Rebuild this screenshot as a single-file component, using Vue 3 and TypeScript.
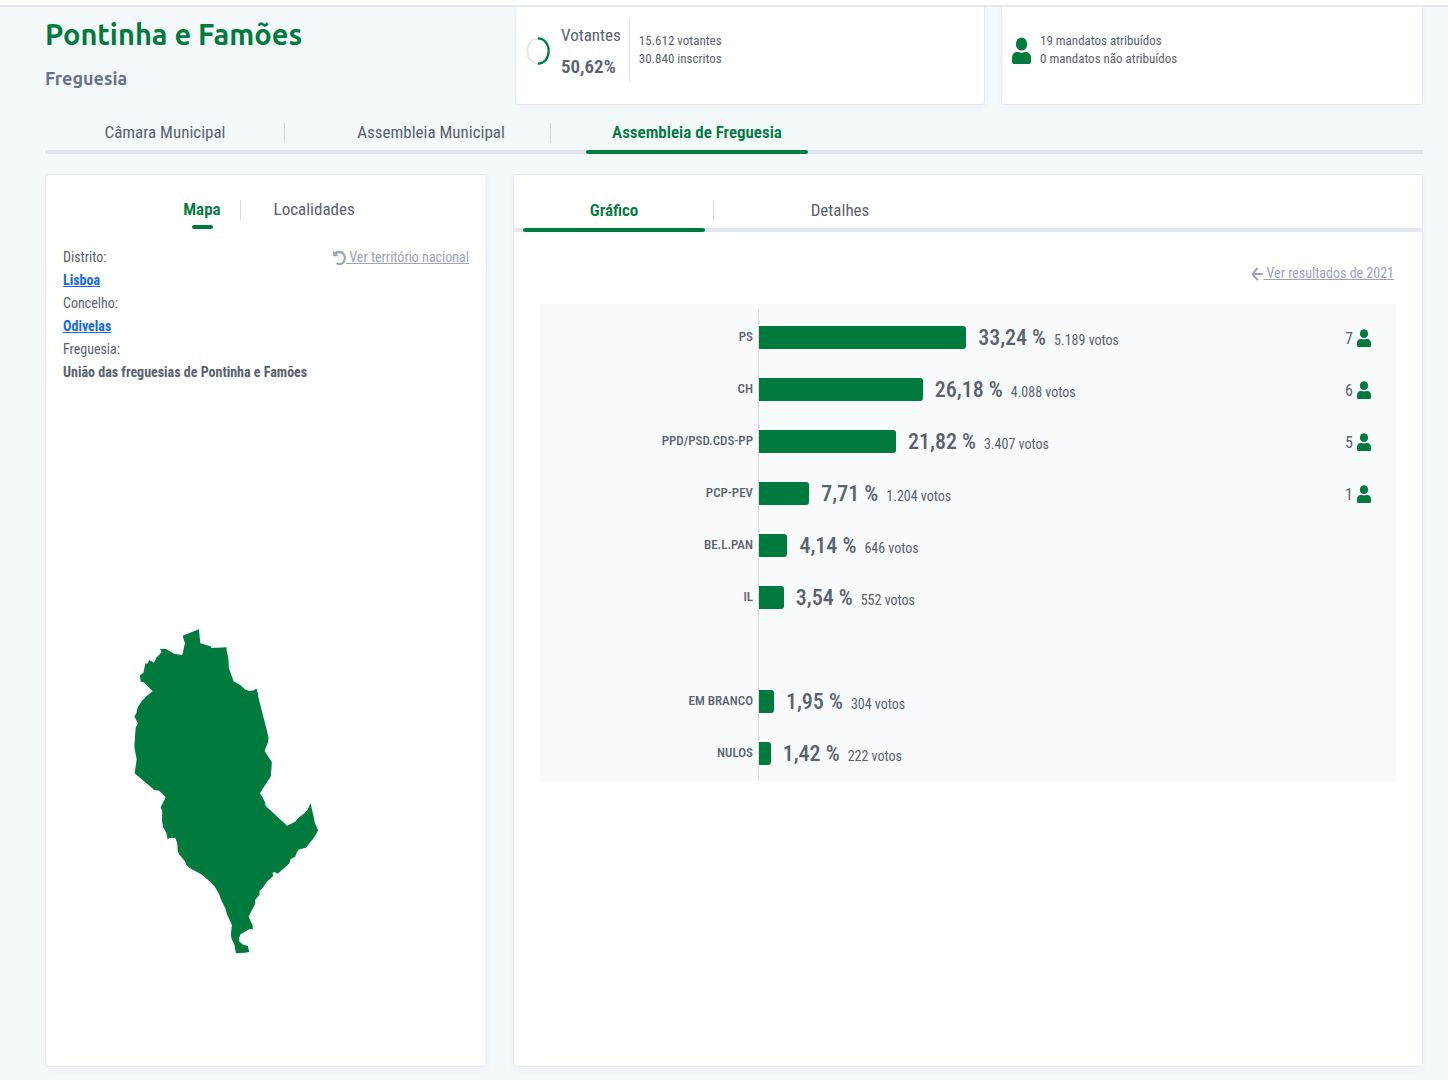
<script setup lang="ts">
import { ref } from 'vue'

interface Result {
  name: string
  percent: number
  label: string
  votes: string
  seats?: number
  separated?: boolean
}

const results: Result[] = [
  { name: 'PS', percent: 33.24, label: '33,24 %', votes: '5.189 votos', seats: 7 },
  { name: 'CH', percent: 26.18, label: '26,18 %', votes: '4.088 votos', seats: 6 },
  { name: 'PPD/PSD.CDS-PP', percent: 21.82, label: '21,82 %', votes: '3.407 votos', seats: 5 },
  { name: 'PCP-PEV', percent: 7.71, label: '7,71 %', votes: '1.204 votos', seats: 1 },
  { name: 'BE.L.PAN', percent: 4.14, label: '4,14 %', votes: '646 votos' },
  { name: 'IL', percent: 3.54, label: '3,54 %', votes: '552 votos' },
  { name: 'EM BRANCO', percent: 1.95, label: '1,95 %', votes: '304 votos', separated: true },
  { name: 'NULOS', percent: 1.42, label: '1,42 %', votes: '222 votos' },
]

const organs = ['Câmara Municipal', 'Assembleia Municipal', 'Assembleia de Freguesia']
const organ = ref(2)
const views = ['Gráfico', 'Detalhes']
const view = ref(0)
const places = ['Mapa', 'Localidades']
const place = ref(0)

const barWidth = (percent: number) => `calc(${(percent * 1.048).toFixed(2)}% + 3px)`
</script>

<template>
  <div class="page">
    <div class="topbar"></div>
    <header class="header">
      <div class="heading">
        <h1>Pontinha e Famões</h1>
        <p>Freguesia</p>
      </div>
      <section class="card summary">
        <svg class="ring" viewBox="0 0 24 28" aria-hidden="true">
          <ellipse cx="12" cy="14" rx="10.7" ry="12.7" fill="none" stroke="#e6eaee" stroke-width="2" />
          <path d="M12 1.3A10.7 12.7 0 0 1 12 26.7" fill="none" stroke="#007a3d" stroke-width="2.2" />
        </svg>
        <div class="turnout">
          <span>Votantes</span>
          <strong>50,62%</strong>
        </div>
        <div class="counts">
          <span>15.612 votantes</span>
          <span>30.840 inscritos</span>
        </div>
      </section>
      <section class="card summary">
        <svg class="person-large" viewBox="0 0 19 27" preserveAspectRatio="none" aria-hidden="true">
          <ellipse cx="9.5" cy="7" rx="5.6" ry="6.6" />
          <path d="M5 15h1.4c2 1 4.2 1 6.2 0H14c3 0 5 2.6 5 6v3.6c0 1.3-.9 2.4-2 2.4H2c-1.1 0-2-1.1-2-2.4V21c0-3.4 2-6 5-6z" />
        </svg>
        <div class="counts">
          <span>19 mandatos atribuídos</span>
          <span>0 mandatos não atribuídos</span>
        </div>
      </section>
    </header>

    <nav class="tabs organ-tabs" role="tablist">
      <button
        v-for="(name, i) in organs"
        :key="name"
        type="button"
        role="tab"
        :aria-selected="organ === i"
        :class="{ active: organ === i }"
        @click="organ = i"
      >{{ name }}</button>
    </nav>

    <main class="panels">
      <section class="card panel">
        <div class="place-tabs" role="tablist">
          <button
            v-for="(name, i) in places"
            :key="name"
            type="button"
            role="tab"
            :aria-selected="place === i"
            :class="{ active: place === i }"
            @click="place = i"
          >{{ name }}</button>
        </div>
        <div class="location">
          <dl>
            <dt>Distrito:</dt>
            <dd><a href="#lisboa">Lisboa</a></dd>
            <dt>Concelho:</dt>
            <dd><a href="#odivelas">Odivelas</a></dd>
            <dt>Freguesia:</dt>
            <dd>União das freguesias de Pontinha e Famões</dd>
          </dl>
          <a class="aux" href="#nacional">
            <svg viewBox="0 0 13 16" width="13" height="16" aria-hidden="true">
              <path d="M0 .5L1.800 2.200C5 0 9 .3 11.300 3.200c2.200 2.800 2.200 7-.1 9.800-2.200 2.600-5.700 2.900-8.400 1.100l1.300-1.900c2 1.200 4 .9 5.500-.8 1.600-1.900 1.600-4.800.1-6.700C8.200 2.900 5.800 2.700 3.700 4L5.400 6.300H0z" fill="currentColor" />
            </svg><span>&nbsp;Ver território nacional</span>
          </a>
        </div>
        <svg class="map" viewBox="42 28 555 977" role="img" aria-label="Mapa da freguesia">
          <path
            d="M188 48L237 29L241 71L272 80L275 85L320 83L320 94L325 112L327 145L341 185L362 197L375 209L389 215L402 212L410 207L414 222L416 235L434 305L446 353L444 370L434 394L456 428L453 470L420 521L427 532L436 550L437 559L462 582L502 619L526 607L535 596L555 581L564 569L572 551L581 589L585 610L595 633L582 656L558 685L537 690L530 701L526 713L513 718L508 732L474 763L462 757L458 762L460 770L442 786L425 810L419 814L419 826L406 841L406 853L386 892L398 917L399 930L389 929L362 945L357 957L359 967L370 976L384 980L388 998L375 1000L348 1002L344 978L335 958L333 945L336 916L321 884L317 869L303 840L298 825L285 803L271 787L245 765L209 746L198 735L196 727L178 705L173 694L172 672L166 655L148 656L143 660L139 640L130 625L126 605L127 575L122 563L137 534L126 521L117 514L102 511L88 499L44 461L50 420L43 382L47 324L54 312L43 290L49 282L53 264L65 245L80 229L98 215L72 189L62 186L60 166L70 160L76 132L84 131L88 121L102 129L109 114L125 98L120 88L136 87L164 103L187 106L195 71Z"
          />
        </svg>
      </section>

      <section class="card panel">
        <div class="tabs view-tabs" role="tablist">
          <button
            v-for="(name, i) in views"
            :key="name"
            type="button"
            role="tab"
            :aria-selected="view === i"
            :class="{ active: view === i }"
            @click="view = i"
          >{{ name }}</button>
        </div>
        <div class="history">
          <a class="aux" href="#2021">
            <svg viewBox="0 0 12 14" width="12" height="14" aria-hidden="true">
              <path d="M6.500 1L1.600 7l4.900 6M1.800 7h9.900" fill="none" stroke="currentColor" stroke-width="2" />
            </svg><span>&nbsp;Ver resultados de 2021</span>
          </a>
        </div>
        <ul class="chart">
          <li v-for="r in results" :key="r.name" :class="{ separated: r.separated }">
            <span class="name">{{ r.name }}</span>
            <div class="track">
              <div class="bar" :style="{ width: barWidth(r.percent) }"></div>
              <p><strong>{{ r.label }}</strong><span>{{ r.votes }}</span></p>
            </div>
            <div class="seats">
              <template v-if="r.seats">
                <span>{{ r.seats }}</span>
                <svg viewBox="0 0 19 27" width="14" height="18" preserveAspectRatio="none" aria-hidden="true">
                  <ellipse cx="9.5" cy="7" rx="5.6" ry="6.6" />
                  <path d="M5 15h1.4c2 1 4.2 1 6.2 0H14c3 0 5 2.6 5 6v3.6c0 1.3-.9 2.4-2 2.4H2c-1.1 0-2-1.1-2-2.4V21c0-3.4 2-6 5-6z" />
                </svg>
              </template>
            </div>
          </li>
        </ul>
      </section>
    </main>
  </div>
</template>

<style>
body {
  margin: 0;
  background: #f4f9fc;
}
</style>

<style scoped>
* {
  box-sizing: border-box;
}

.page {
  display: flex;
  flex-direction: column;
  min-height: 100vh;
  padding-bottom: 13px;
  color: #57626f;
  background: #f4f9fc;
  font-family: "Roboto Condensed", Roboto, sans-serif;
  font-size: 14px;
}

.topbar {
  height: 7px;
  background: #fff;
  border-bottom: 2px solid #e6e9ec;
}

.header {
  display: grid;
  grid-template-columns: 454fr 470fr 422fr;
  gap: 16px;
  height: 98px;
  padding: 0 25px 0 45px;
}

h1 {
  margin: 5px 0 0;
  color: #007a3d;
  font-family: Ubuntu, "Noto Sans", sans-serif;
  font-size: 29px;
  font-weight: 600;
  line-height: 44px;
}

.heading p {
  margin: 9px 0 0;
  color: #66718f;
  font-family: Ubuntu, "Noto Sans", sans-serif;
  font-size: 18px;
  font-weight: 600;
  line-height: 26px;
}

.card {
  background: #fff;
  border: 1px solid #e4eaf0;
  border-radius: 4px;
  box-shadow: 0 3px 6px rgba(60, 80, 110, 0.04);
}

.summary {
  display: flex;
  align-items: center;
  padding: 0 10px 10px;
  border-top: 0;
  border-radius: 0 0 4px 4px;
}

.ring {
  width: 24px;
  height: 28px;
  margin-right: 11px;
}

.turnout {
  display: flex;
  flex-direction: column;
  height: 62px;
  padding-right: 8px;
  border-right: 1px solid #e4e8ec;
  font-size: 17px;
  line-height: 31px;
}

.turnout strong {
  font-size: 19px;
  font-weight: 600;
}

.counts {
  display: flex;
  flex-direction: column;
  margin-left: 9px;
  padding-bottom: 2px;
  font-size: 13px;
  line-height: 18px;
}

.person-large {
  width: 19px;
  height: 27px;
}

.person-large,
.seats svg,
.map {
  fill: #007a3d;
}

button {
  padding: 0;
  border: 0;
  background: none;
  color: inherit;
  font: inherit;
  cursor: pointer;
}

.active {
  color: #007a3d;
  font-weight: 600;
}

.tabs {
  display: flex;
  gap: 26px;
  border-bottom: 4px solid #e2e8ee;
  font-size: 17px;
}

.tabs button {
  position: relative;
  height: 36px;
}

.organ-tabs {
  margin: 9px 25px 20px 45px;
}

.organ-tabs button {
  width: 240px;
}

.view-tabs button {
  width: 200px;
}

.tabs button:not(:last-child)::before {
  content: "";
  position: absolute;
  top: 9px;
  right: 0;
  width: 1px;
  height: 20px;
  background: #d3d9df;
}

.tabs .active::after {
  content: "";
  position: absolute;
  right: 9px;
  bottom: -4px;
  left: 9px;
  height: 4px;
  border-radius: 2px;
  background: #007a3d;
}

.panels {
  display: grid;
  flex: 1;
  grid-template-columns: 442fr 910fr;
  gap: 26px;
  padding: 0 25px 0 45px;
}

.place-tabs {
  display: flex;
  justify-content: center;
  padding-top: 19px;
  font-size: 17px;
}

.place-tabs button {
  position: relative;
  height: 30px;
  padding: 0 19px;
}

.place-tabs button + button {
  padding: 0 13px 0 34px;
}

.place-tabs button + button::before {
  content: "";
  position: absolute;
  top: 6px;
  left: 0;
  width: 1px;
  height: 20px;
  background: #d3d9df;
}

.place-tabs .active::after {
  content: "";
  position: absolute;
  bottom: -5px;
  left: 50%;
  width: 21px;
  height: 4px;
  margin-left: -10px;
  border-radius: 2px;
  background: #007a3d;
}

.location {
  display: flex;
  justify-content: space-between;
  align-items: flex-start;
  padding: 22px 17px 0;
  line-height: 23px;
}

.location dl {
  margin: 0;
}

.location dd {
  margin: 0;
  font-weight: 700;
}

dd a {
  color: #1668f0;
}

.aux {
  display: flex;
  align-items: center;
  color: #9ba3bd;
  line-height: 23px;
  text-decoration: none;
  white-space: nowrap;
}

.location .aux {
  margin-left: -40px;
}

.aux span {
  text-decoration: underline;
}

.map {
  display: block;
  width: 42%;
  margin: 245px 0 0 88px;
}

.view-tabs {
  padding-top: 17px;
}

.history {
  display: flex;
  justify-content: flex-end;
  padding: 30px 28px 0;
}

.chart {
  margin: 19px 26px 0;
  padding: 5px 0;
  background: #f9fafc;
  list-style: none;
}

.chart li {
  display: grid;
  grid-template-columns: 218px 1fr 51px;
  height: 52px;
}

.chart .separated {
  height: 104px;
  padding-top: 52px;
}

.name {
  padding-right: 5px;
  font-size: 13px;
  font-weight: 500;
  line-height: 56px;
  text-align: right;
}

.track {
  display: flex;
  align-items: center;
  border-left: 1px solid #d5dbe1;
}

.separated .track {
  margin-top: -52px;
  padding-top: 52px;
}

.bar {
  height: 23px;
  border-radius: 0 3px 3px 0;
  background: #007a3d;
}

.track p {
  margin: 0 0 0 12px;
  padding-top: 4px;
  line-height: 30px;
  white-space: nowrap;
}

.track strong {
  margin-right: 8px;
  font-size: 22px;
  font-weight: 500;
}

.seats {
  display: flex;
  align-items: center;
  gap: 4px;
  padding-top: 2px;
  font-size: 16px;
}
</style>
